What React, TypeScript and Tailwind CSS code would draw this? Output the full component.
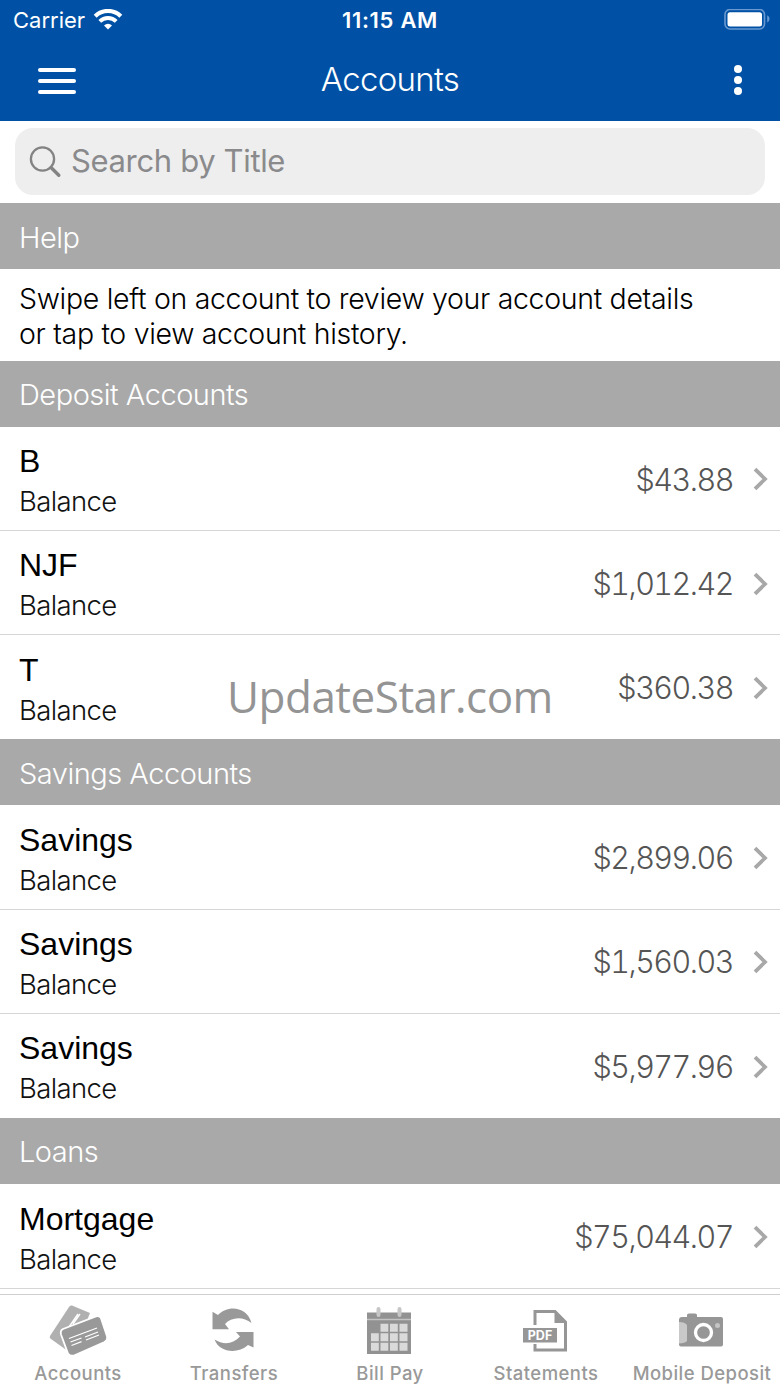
import React from "react";

interface Account {
  name: string;
  balance: string;
}

interface AccountGroup {
  title: string;
  accounts: Account[];
}

const groups: AccountGroup[] = [
  {
    title: "Deposit Accounts",
    accounts: [
      { name: "B", balance: "$43.88" },
      { name: "NJF", balance: "$1,012.42" },
      { name: "T", balance: "$360.38" },
    ],
  },
  {
    title: "Savings Accounts",
    accounts: [
      { name: "Savings", balance: "$2,899.06" },
      { name: "Savings", balance: "$1,560.03" },
      { name: "Savings", balance: "$5,977.96" },
    ],
  },
  {
    title: "Loans",
    accounts: [{ name: "Mortgage", balance: "$75,044.07" }],
  },
];

function WifiIcon() {
  return (
    <svg className="ml-[8px] h-[22px] w-[30px]" viewBox="0 0 30 22" fill="none">
      <path d="M2.2 7.2a18.2 18.2 0 0 1 25.6 0" stroke="white" strokeWidth="4.2" />
      <path d="M6.8 12.4a11.6 11.6 0 0 1 16.4 0" stroke="white" strokeWidth="3.8" />
      <path d="M15 20.6l-4-4.2a5.9 5.9 0 0 1 8 0z" fill="white" />
    </svg>
  );
}

function BatteryIcon() {
  return (
    <svg className="h-[22px] w-[48px]" viewBox="0 0 48 22" fill="none">
      <rect x="1" y="0.5" width="39.5" height="19.5" rx="5" stroke="#6899d0" strokeWidth="1.6" />
      <rect x="3.5" y="3.2" width="34.5" height="14.2" rx="2.5" fill="white" />
      <path d="M43.2 6.3c3 1.4 3 5.8 0 7.2z" fill="#6899d0" />
    </svg>
  );
}

function Header() {
  return (
    <header className="h-[121px] bg-[#0051a5] text-white">
      <div className="grid h-10 grid-cols-3 items-center pr-[8px] pl-[13px]">
        <div className="flex items-center">
          <span className="text-[22px]">Carrier</span>
          <WifiIcon />
        </div>
        <span className="-ml-[5px] text-center text-[22px] font-semibold tracking-[0.7px]">11:15 AM</span>
        <div className="flex justify-end">
          <BatteryIcon />
        </div>
      </div>
      <div className="grid h-20 grid-cols-3 items-center pr-[38px] pl-[38px]">
        <button aria-label="Menu" className="flex w-[38px] flex-col gap-[7.4px] pt-[2px]">
          <span className="h-[4px] rounded-full bg-white" />
          <span className="h-[4px] rounded-full bg-white" />
          <span className="h-[4px] rounded-full bg-white" />
        </button>
        <h1 className="text-center text-[33px] font-light tracking-[-0.7px]">Accounts</h1>
        <button aria-label="More" className="flex flex-col items-end gap-[3.4px]">
          <span className="size-2 rounded-full bg-white" />
          <span className="size-2 rounded-full bg-white" />
          <span className="size-2 rounded-full bg-white" />
        </button>
      </div>
    </header>
  );
}

function SearchBar() {
  return (
    <div className="h-[82.4px] px-[15px] pt-[7px]">
      <div className="flex h-[67px] items-center rounded-[18px] bg-[#eeeeee] pl-[14px] text-[#8a8a8c]">
        <svg className="h-[34px] w-[34px]" viewBox="0 0 34 34" fill="none" stroke="#838383">
          <circle cx="13.5" cy="14" r="11.6" strokeWidth="2.3" />
          <path d="M22 22.5l7.8 7.8" strokeWidth="3.4" strokeLinecap="round" />
        </svg>
        <span className="ml-[8px] text-[31px] tracking-[-0.35px]">Search by Title</span>
      </div>
    </div>
  );
}

function SectionHeader({ children }: { children: React.ReactNode }) {
  return (
    <h2 className="flex h-[66px] items-center bg-[#a9a9a9] pt-[2px] pl-[19px] text-[29px] font-light tracking-[-0.5px] text-white">
      {children}
    </h2>
  );
}

function AccountRow({ name, balance }: Account) {
  return (
    <li className="flex h-[104.2px] items-center justify-between border-b border-[#d6d6d6] pr-[12px] pl-[19px] last:border-b-0">
      <div className="pt-[5px]">
        <p className="font-['Liberation_Sans',sans-serif] text-[32px] leading-[40px] text-black">{name}</p>
        <p className="text-[27.5px] leading-[40px] font-light tracking-[-0.65px] text-[#111]">Balance</p>
      </div>
      <div className="flex items-center pt-[2px]">
        <span className="text-[30.5px] font-light tracking-[-1.5px] text-[#555] tabular-nums">{balance}</span>
        <svg className="ml-[20px] h-[24px] w-[15px]" viewBox="0 0 15 24" fill="none">
          <path d="M2 2.2l10 9.8-10 9.8" stroke="#a8a8a8" strokeWidth="3.8" />
        </svg>
      </div>
    </li>
  );
}

const tabs = [
  {
    label: "Accounts",
    icon: (
      <g>
        <path
          d="M22 1.5L40 9 24 49 15 45 1 35q-2-1-1-3L19 3q1-2 3-1.5z"
          fill="#b0b0b0"
        />
        <path d="M19 23l9-13M23 20l7-10" stroke="white" strokeWidth="1.4" />
        <path
          d="M13 25L46 12.3q4-1 5 2l6 18q1 4-3 6L24 51.5q-4 1-6-2l-7-19q-1-4 2-5.5z"
          fill="#999999"
          stroke="white"
          strokeWidth="1.8"
        />
        <path d="M19 34.5l28-10.5M20.5 38l11-4M21.5 41.5l10-3.8M35 33l13-5M36 36l13-5" stroke="white" strokeWidth="1.3" />
      </g>
    ),
  },
  {
    label: "Transfers",
    icon: (
      <g fill="#999999">
        <path d="M6.5 7.8L12 11C22 .5 41 2.5 45.5 19 37 12 25 13 19 20l4 5.2H6.5z" />
        <path d="M47.5 43.5L42 41C31 51 13 48 8.5 35.5c9 5.5 18 5 25.5-3L30 28h17.5z" />
      </g>
    ),
  },
  {
    label: "Bill Pay",
    icon: (
      <g>
        <rect x="5" y="8.5" width="44" height="41.5" fill="#929292" />
        <path d="M5 15.5h44" stroke="#c4c4c4" strokeWidth="1.5" />
        <path
          d="M18.5 19.7h7.8v8h-7.8zM28 19.7h7.8v8H28zM37.5 19.7h8v8h-8zM9 29.2h7.8v8H9zM18.5 29.2h7.8v8h-7.8zM28 29.2h7.8v8H28zM37.5 29.2h8v8h-8zM9 38.7h7.8v8H9zM18.5 38.7h7.8v8h-7.8zM28 38.7h7.8v8H28zM37.5 38.7h8v8h-8z"
          fill="#dadada"
        />
        <path d="M16.5 5v6M37.5 5v6" stroke="#c6c6c6" strokeWidth="4" strokeLinecap="round" />
      </g>
    ),
  },
  {
    label: "Statements",
    icon: (
      <g>
        <path d="M17 21V7.5h20L47.5 18v28H17v-6" stroke="#969696" strokeWidth="3" fill="none" />
        <path d="M36.5 7v12H49z" fill="#969696" />
        <rect x="5" y="24" width="34" height="14.5" fill="#969696" />
        <text
          x="22"
          y="35.8"
          textAnchor="middle"
          fontSize="12.5"
          fontWeight="700"
          fontFamily="Inter, sans-serif"
          fill="white"
        >
          PDF
        </text>
      </g>
    ),
  },
  {
    label: "Mobile Deposit",
    icon: (
      <g>
        <path
          d="M8 13h5V11q0-1.5 2-1.5h6q2 0 2 1.5v2h24q2 0 2 2v25.5q0 2-2 2H7q-2 0-2-2V16q0-3 3-3z"
          fill="#969696"
        />
        <path d="M5 18q6 0 8 3v16q-2 2-8 2.5z" fill="#c9c9c9" />
        <circle cx="29.5" cy="28.5" r="8" stroke="white" strokeWidth="3.3" fill="none" />
        <circle cx="43.5" cy="21.5" r="2.5" fill="#c4c4c4" />
      </g>
    ),
  },
];

function TabBar() {
  return (
    <nav className="mt-[5px] grid h-[93px] grid-cols-5 border-t border-[#cfcfcf]">
      {tabs.map((tab) => (
        <button key={tab.label} className="flex flex-col items-center pt-[9px] whitespace-nowrap">
          <svg className="h-[54px] w-[56px] overflow-visible" viewBox="0 0 56 54">
            {tab.icon}
          </svg>
          <span className="mt-px text-[18.5px] leading-[28px] font-medium tracking-[0.45px] text-[#999]">
            {tab.label}
          </span>
        </button>
      ))}
    </nav>
  );
}

export default function App() {
  return (
    <main className="relative h-[1387px] w-[780px] overflow-hidden bg-white font-['Inter',sans-serif]">
      <Header />
      <SearchBar />
      <SectionHeader>Help</SectionHeader>
      <p className="h-[91.5px] pt-[12px] pl-[19px] text-[28.5px] leading-[35px] font-light tracking-[-0.32px] text-black">
        Swipe left on account to review your account details
        <br />
        or tap to view account history.
      </p>
      {groups.map((group) => (
        <section key={group.title}>
          <SectionHeader>{group.title}</SectionHeader>
          <ul>
            {group.accounts.map((account, i) => (
              <AccountRow key={i} {...account} />
            ))}
          </ul>
        </section>
      ))}
      <div className="h-px bg-[#d6d6d6]" />
      <TabBar />
      <div className="pointer-events-none absolute top-[666px] left-[227px] font-['Open_Sans',sans-serif] text-[44px] leading-[60px] tracking-[-0.5px] text-[#949494]">
        UpdateStar.com
      </div>
    </main>
  );
}
